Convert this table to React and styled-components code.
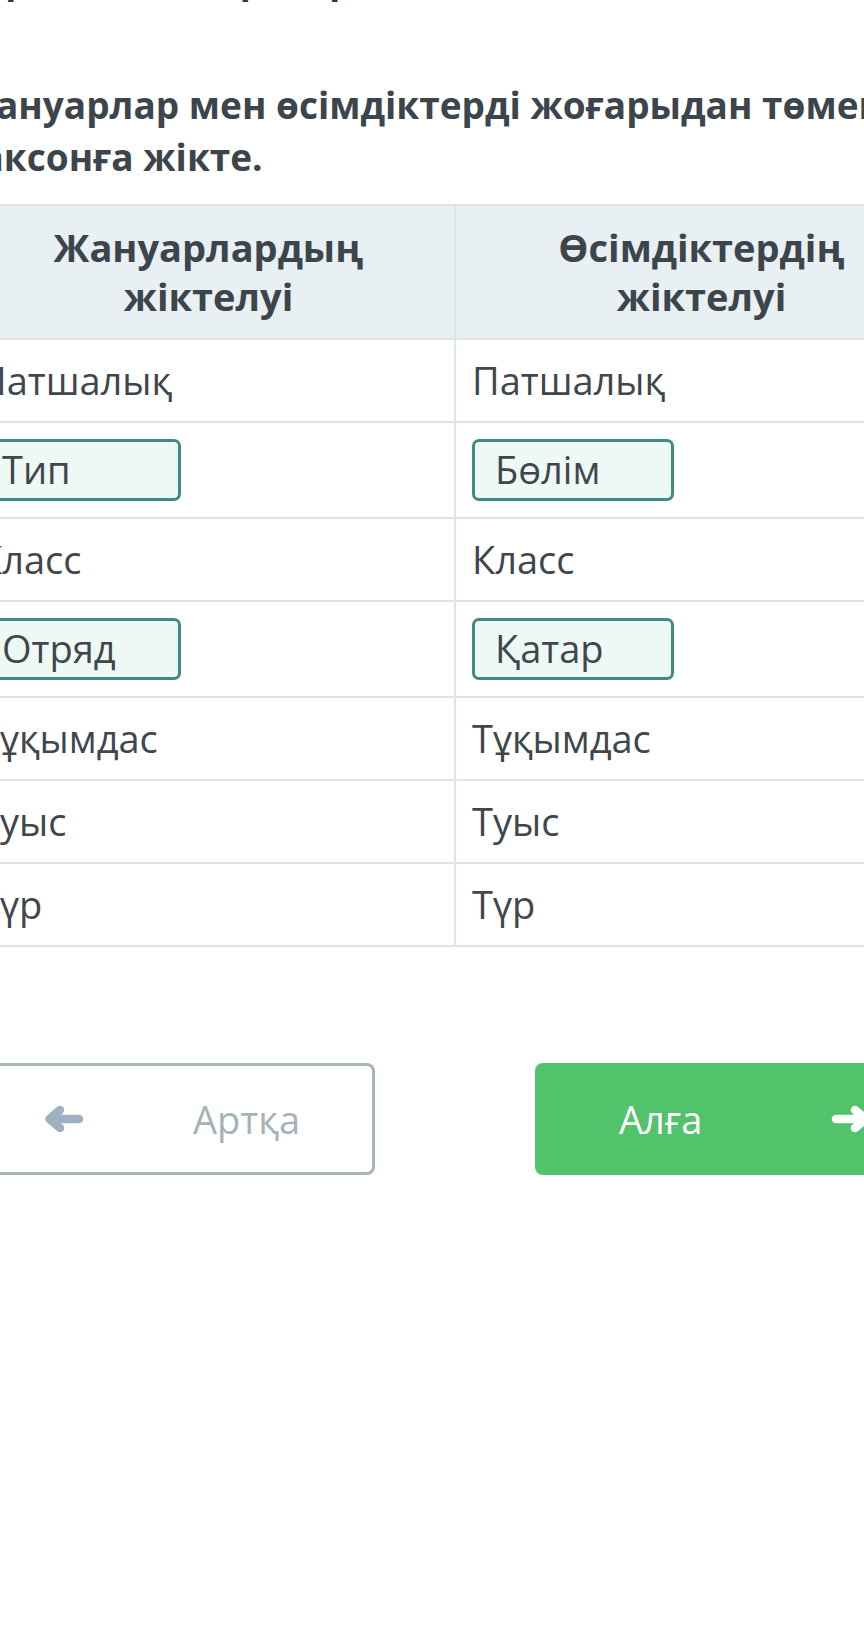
import React from "react";
import styled, { createGlobalStyle } from "styled-components";

const Global = createGlobalStyle`
  html, body {
    margin: 0;
    padding: 0;
    background: #ffffff;
    overflow: hidden;
  }
  body {
    font-family: "Open Sans", "Noto Sans", sans-serif;
    color: #3d454c;
  }
`;

const Page = styled.div`
  width: 988px;
  margin-left: -39px;
  margin-top: -46px;
  display: flex;
  flex-direction: column;
`;

const PrevLine = styled.div`
  font-size: 36px;
  line-height: 52px;
  font-weight: 700;
  white-space: nowrap;
  color: #2f363c;
  height: 52px;
`;

const Title = styled.h2`
  margin: 73px 0 21px 0;
  font-size: 37px;
  line-height: 52px;
  font-weight: 700;
  color: #3d454c;
  white-space: nowrap;
`;

const Table = styled.table`
  width: 988px;
  table-layout: fixed;
  border-collapse: collapse;
  border: 2px solid #dfe4e7;
`;

const HeadCell = styled.th`
  background: #e9f0f4;
  border: 2px solid #dfe4e7;
  padding: 17px 16px;
  font-size: 38px;
  line-height: 49px;
  font-weight: 700;
  color: #3d454c;
  text-align: center;
`;

const Cell = styled.td`
  border: 2px solid #dfe4e7;
  padding: ${(p) => (p.$answer ? "16px 16px" : "15px 16px")};
  font-size: 38px;
  line-height: 51px;
  font-weight: 400;
  color: #3f464c;
  text-align: left;
`;

const AnswerBox = styled.div`
  width: 202px;
  height: 62px;
  box-sizing: border-box;
  border: 3px solid #3f8b83;
  border-radius: 7px;
  background: #eef9f5;
  padding-left: 20px;
  font-size: 38px;
  line-height: 55px;
  color: #3f464c;
`;

const Nav = styled.div`
  margin-top: 116px;
  display: flex;
  justify-content: space-between;
`;

const NavButton = styled.button`
  width: 414px;
  height: 112px;
  box-sizing: border-box;
  display: flex;
  align-items: center;
  justify-content: space-between;
  padding: ${(p) => (p.$primary ? "0 78px 0 84px" : "0 72px 0 80px")};
  border-radius: 8px;
  font-family: "Open Sans", "Noto Sans", sans-serif;
  font-size: 38px;
  font-weight: 400;
  cursor: pointer;
  border: ${(p) => (p.$primary ? "none" : "3px solid #a8b6bc")};
  background: ${(p) => (p.$primary ? "#52c26b" : "#ffffff")};
  color: ${(p) => (p.$primary ? "#ffffff" : "#a4b2ba")};
`;

const ArrowIcon = ({ dir, color }) => (
  <svg width="40" height="28" viewBox="0 0 40 28" style={{ display: "block" }}>
    <g
      transform={dir === "right" ? "translate(40 0) scale(-1 1)" : undefined}
      fill="none"
      stroke={color}
      strokeWidth="8.5"
      strokeLinecap="round"
      strokeLinejoin="round"
    >
      <path d="M35 14H7" />
      <path d="M16 5L5.5 14L16 23" />
    </g>
  </svg>
);

const animals = [
  { t: "Патшалық" },
  { t: "Тип", a: true },
  { t: "Класс" },
  { t: "Отряд", a: true },
  { t: "Тұқымдас" },
  { t: "Туыс" },
  { t: "Түр" },
];

const plants = [
  { t: "Патшалық" },
  { t: "Бөлім", a: true },
  { t: "Класс" },
  { t: "Қатар", a: true },
  { t: "Тұқымдас" },
  { t: "Туыс" },
  { t: "Түр" },
];

export default function App() {
  return (
    <>
      <Global />
      <Page>
        <PrevLine>Берілген сөздерді орнына қой.</PrevLine>
        <Title>
          Жануарлар мен өсімдіктерді жоғарыдан төмен қарай
          <br />
          таксонға жікте.
        </Title>
        <Table>
          <thead>
            <tr>
              <HeadCell>
                Жануарлардың
                <br />
                жіктелуі
              </HeadCell>
              <HeadCell>
                Өсімдіктердің
                <br />
                жіктелуі
              </HeadCell>
            </tr>
          </thead>
          <tbody>
            {animals.map((row, i) => (
              <tr key={i}>
                <Cell $answer={row.a}>
                  {row.a ? <AnswerBox>{row.t}</AnswerBox> : row.t}
                </Cell>
                <Cell $answer={plants[i].a}>
                  {plants[i].a ? (
                    <AnswerBox>{plants[i].t}</AnswerBox>
                  ) : (
                    plants[i].t
                  )}
                </Cell>
              </tr>
            ))}
          </tbody>
        </Table>
        <Nav>
          <NavButton>
            <ArrowIcon dir="left" color="#9fb1c1" />
            <span>Артқа</span>
          </NavButton>
          <NavButton $primary>
            <span>Алға</span>
            <ArrowIcon dir="right" color="#ffffff" />
          </NavButton>
        </Nav>
      </Page>
    </>
  );
}
